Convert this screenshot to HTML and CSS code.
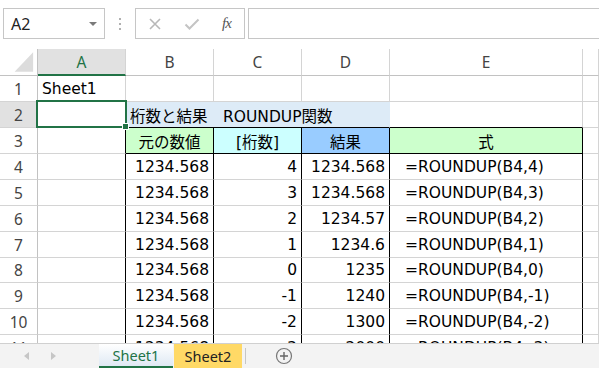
FILE: index.html
```html
<!DOCTYPE html>
<html lang="ja">
<head>
  <meta charset="UTF-8">
  <meta name="viewport" content="width=device-width, initial-scale=1.0">
  <title>ROUNDUP関数</title>
  <link rel="stylesheet" href="styles.css">
</head>
<body>
  <div class="toolbar">
    <div class="namebox"><span>A2</span><span class="drop"></span></div>
    <div class="dots"><i></i><i></i><i></i></div>
    <div class="fxbox">
      <svg class="ico" width="14" height="14" viewBox="0 0 14 14"><path d="M2 2 L12 12 M12 2 L2 12" stroke="#b8b8b8" stroke-width="1.6" fill="none"/></svg>
      <svg class="ico" width="16" height="14" viewBox="0 0 16 14"><path d="M1.5 7.5 L5.5 11.5 L14.5 2.5" stroke="#c4c4c4" stroke-width="2" fill="none"/></svg>
      <span class="fx">fx</span>
    </div>
    <div class="formula"></div>
  </div>

  <div class="main">
    <div class="sheet">
      <div class="hd corner"><svg width="38" height="26" viewBox="0 0 38 26"><polygon points="34,3 34,23 15,23" fill="#dcdcdc"/></svg></div>
      <div class="hd col sel">A</div>
      <div class="hd col">B</div>
      <div class="hd col">C</div>
      <div class="hd col">D</div>
      <div class="hd col">E</div>
      <div class="hd col"></div>

      <div class="rh">1</div>
      <div class="c l">Sheet1</div><div class="c"></div><div class="c"></div><div class="c"></div><div class="c"></div><div class="c"></div>

      <div class="rh rsel">2</div>
      <div class="c"></div>
      <div class="c title">桁数と結果　ROUNDUP関数</div>
      <div class="c top"></div><div class="c"></div>

      <div class="rh">3</div>
      <div class="c edge"></div>
      <div class="c t hcell green">元の数値</div>
      <div class="c t hcell cyan">[桁数]</div>
      <div class="c t hcell blue">結果</div>
      <div class="c t hcell green">式</div>
      <div class="c"></div>

      <div class="rh">4</div>
      <div class="c edge"></div><div class="c t r">1234.568</div><div class="c t r">4</div><div class="c t r">1234.568</div><div class="c t f">=ROUNDUP(B4,4)</div><div class="c"></div>
      <div class="rh">5</div>
      <div class="c edge"></div><div class="c t r">1234.568</div><div class="c t r">3</div><div class="c t r">1234.568</div><div class="c t f">=ROUNDUP(B4,3)</div><div class="c"></div>
      <div class="rh">6</div>
      <div class="c edge"></div><div class="c t r">1234.568</div><div class="c t r">2</div><div class="c t r">1234.57</div><div class="c t f">=ROUNDUP(B4,2)</div><div class="c"></div>
      <div class="rh">7</div>
      <div class="c edge"></div><div class="c t r">1234.568</div><div class="c t r">1</div><div class="c t r">1234.6</div><div class="c t f">=ROUNDUP(B4,1)</div><div class="c"></div>
      <div class="rh">8</div>
      <div class="c edge"></div><div class="c t r">1234.568</div><div class="c t r">0</div><div class="c t r">1235</div><div class="c t f">=ROUNDUP(B4,0)</div><div class="c"></div>
      <div class="rh">9</div>
      <div class="c edge"></div><div class="c t r">1234.568</div><div class="c t r">-1</div><div class="c t r">1240</div><div class="c t f">=ROUNDUP(B4,-1)</div><div class="c"></div>
      <div class="rh">10</div>
      <div class="c edge"></div><div class="c t r">1234.568</div><div class="c t r">-2</div><div class="c t r">1300</div><div class="c t f">=ROUNDUP(B4,-2)</div><div class="c"></div>
      <div class="rh">11</div>
      <div class="c edge"></div><div class="c t r">1234.568</div><div class="c t r">-3</div><div class="c t r">2000</div><div class="c t f">=ROUNDUP(B4,-3)</div><div class="c"></div>

      <div class="cursor"><span class="handle"></span></div>
    </div>
  </div>

  <div class="tabs">
    <div class="nav"><span class="arrow left"></span><span class="arrow right"></span></div>
    <div class="tab active">Sheet1</div>
    <div class="tab gold">Sheet2</div>
    <div class="tabsep"></div>
    <svg class="plus" width="18" height="18" viewBox="0 0 18 18"><circle cx="9" cy="9" r="7.5" fill="none" stroke="#777" stroke-width="1.2"/><path d="M9 5 V13 M5 9 H13" stroke="#666" stroke-width="1.4"/></svg>
  </div>
</body>
</html>
```

FILE: styles.css
```css
body { margin: 0; width: 599px; height: 368px; overflow: hidden; background: #fff; font-family: "DejaVu Sans", "Noto Sans CJK JP", sans-serif; }

.toolbar { height: 49px; display: flex; align-items: flex-start; padding: 8px 0 0 3px; box-sizing: border-box; }
.namebox { width: 102px; height: 31px; box-sizing: border-box; border: 1px solid #c6c6c6; display: flex; align-items: center; justify-content: space-between; padding: 0 7px 0 7px; font-family: "Noto Sans", sans-serif; font-size: 16px; color: #222; }
.drop { width: 0; height: 0; border-left: 4px solid transparent; border-right: 4px solid transparent; border-top: 4px solid #7a7a7a; }
.dots { width: 30px; height: 31px; display: flex; flex-direction: column; align-items: center; justify-content: center; gap: 3px; }
.dots i { width: 2px; height: 2px; background: #b0b0b0; }
.fxbox { width: 110px; height: 31px; box-sizing: border-box; border: 1px solid #c6c6c6; display: flex; align-items: center; padding-left: 12px; gap: 22px; }
.fx { font-family: "Liberation Serif", serif; font-style: italic; font-size: 15px; color: #555; letter-spacing: -1px; }
.formula { flex: 1; height: 31px; box-sizing: border-box; border: 1px solid #c6c6c6; border-right: none; margin-left: 3px; }

.main { height: 294px; overflow: hidden; }
.sheet { position: relative; display: grid; grid-template-columns: 38px 88px 88px 88px 88px 193px 1fr; grid-template-rows: 27px repeat(7, 26px) 25px repeat(3, 26px); }

.hd { box-sizing: border-box; border-right: 1px solid #d4d4d4; border-bottom: 1px solid #c2c2c2; font-family: "Noto Sans", sans-serif; font-size: 15.5px; color: #444; display: flex; align-items: center; justify-content: center; }
.corner { border-right-color: #c2c2c2; }
.col.sel { background: #e1e1e1; color: #217346; border-bottom: 2px solid #217346; }

.rh { box-sizing: border-box; border-right: 1px solid #c2c2c2; border-bottom: 1px solid #d4d4d4; font-family: "Noto Sans", sans-serif; font-size: 15.5px; color: #444; display: flex; align-items: center; justify-content: center; }
.rh.rsel { background: #e1e1e1; }

.c { box-sizing: border-box; border-right: 1px solid #d4d4d4; border-bottom: 1px solid #d4d4d4; font-size: 15.5px; color: #000; display: flex; align-items: center; padding: 0 4px; white-space: nowrap; overflow: hidden; }
.c.l { padding-left: 4px; }
.c.r { justify-content: flex-end; }
.c.f { padding-left: 15px; }
.c.edge { border-right-color: #000; }
.c.t { border-right-color: #000; }
.title { grid-column: span 3; background: #ddebf7; border-right-color: #ddebf7; border-bottom-color: #000; }
.top { border-bottom-color: #000; }
.hcell { justify-content: center; border-bottom-color: #000; }
.green { background: #ccffcc; }
.cyan { background: #ccffff; }
.blue { background: #99ccff; }

.cursor { position: absolute; left: 36px; top: 51px; width: 91px; height: 28px; box-sizing: border-box; border: 2px solid #217346; }
.handle { position: absolute; right: -4px; bottom: -4px; width: 5px; height: 5px; background: #217346; border: 1px solid #fff; }

.tabs { height: 25px; background: #f3f3f3; border-top: 1px solid #d0d0d0; box-sizing: border-box; display: flex; align-items: stretch; }
.nav { width: 99px; display: flex; align-items: center; padding-left: 24px; box-sizing: border-box; gap: 22px; }
.arrow { width: 0; height: 0; border-top: 4px solid transparent; border-bottom: 4px solid transparent; }
.arrow.left { border-right: 5px solid #c6c6c6; }
.arrow.right { border-left: 5px solid #c6c6c6; }
.tab { font-family: "Noto Sans", sans-serif; font-size: 14.5px; display: flex; align-items: center; justify-content: center; box-sizing: border-box; }
.tab.active { width: 74px; color: #217346; background: linear-gradient(#ffffff, #dfe9f4); border-bottom: 2px solid #217346; }
.tab.gold { width: 68px; color: #222; background: #ffd966; margin-left: 1px; }
.tabsep { width: 1px; background: #c6c6c6; margin: 4px 0 4px 3px; }
.plus { align-self: center; margin-left: 29px; }
```
